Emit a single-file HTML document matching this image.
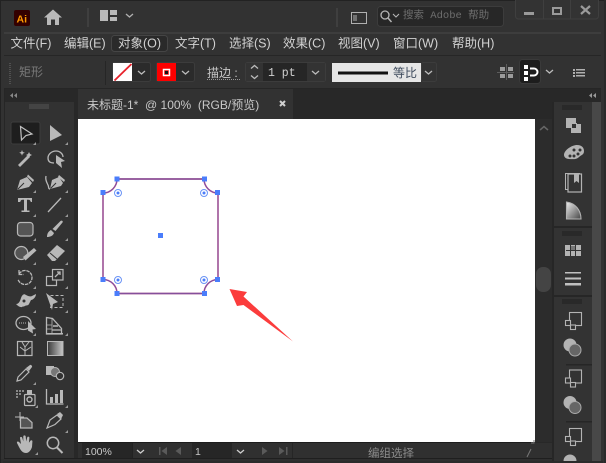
<!DOCTYPE html>
<html><head><meta charset="utf-8"><style>
html,body{margin:0;padding:0;background:#323232;width:606px;height:463px;overflow:hidden}
svg{display:block}
text{font-family:"Liberation Sans","Noto Sans CJK SC",sans-serif}
.m{font-size:12.5px;fill:#d2d2d2}
.t{fill:#b8b8b8;stroke:none}
.o{fill:none;stroke:#b8b8b8;stroke-width:1.3}
</style></head><body>
<svg width="606" height="463" viewBox="0 0 606 463" xmlns="http://www.w3.org/2000/svg">
<rect width="606" height="463" fill="#323232"/>
<rect x="0" y="0" width="606" height="1" fill="#222"/>
<rect x="0" y="0" width="1" height="463" fill="#222"/>
<rect x="604" y="0" width="2" height="463" fill="#2a2a2a"/>
<!-- title bar -->
<rect x="14" y="10" width="16" height="16" rx="2" fill="#330000"/>
<text x="16.500" y="22.500" font-size="10.500" font-weight="bold" fill="#ff9a00">Ai</text>
<path d="M44 17.500 L53 9.500 L62 17.500 H59 V25 H55 V19.500 H51 V25 H47 V17.500Z" fill="#b9b9b9"/>
<rect x="87" y="8" width="2" height="19" fill="#3f3f3f"/>
<path d="M100 10h8v11h-8zM110 10h7v5h-7zM110 17h7v4h-7z" fill="#b9b9b9"/>
<path d="M126 14l3.500 3 3.500-3" fill="none" stroke="#b0b0b0" stroke-width="1.300"/>
<rect x="336" y="8" width="2" height="19" fill="#3f3f3f"/>
<rect x="351.500" y="12.500" width="15" height="11" fill="none" stroke="#b0b0b0"/>
<path d="M354 15v6M356 15v6" stroke="#b0b0b0" stroke-width="1"/>
<rect x="377.500" y="6.500" width="126" height="20" rx="3" fill="#272727" stroke="#3c3c3c"/>
<circle cx="385" cy="15" r="4" fill="none" stroke="#b5b5b5" stroke-width="1.300"/>
<path d="M388 18l3.500 4" stroke="#b5b5b5" stroke-width="1.500"/>
<path d="M393 14l3 3 3-3" fill="none" stroke="#b5b5b5" stroke-width="1.100"/>
<text x="403" y="18" font-size="10.500" fill="#6e6e6e" style="font-family:'Liberation Mono','Noto Sans CJK SC',monospace">搜索 Adobe 帮助</text>
<path d="M515.500 0v16a3 3 0 0 0 3 3h77a3 3 0 0 0 3-3V0" fill="#333" stroke="#3f3f3f"/>
<path d="M543.500 0v19M570.500 0v19" stroke="#3f3f3f"/>
<rect x="524" y="12" width="10" height="3" fill="#9a9a9a"/>
<rect x="553" y="8" width="8" height="6" fill="none" stroke="#9a9a9a" stroke-width="2"/>
<path d="M581 6l9 8M590 6l-9 8" stroke="#9a9a9a" stroke-width="2.200"/>
<rect x="4" y="32" width="597" height="2" fill="#3d3d3d"/>
<!-- menu -->
<rect x="111.500" y="35.500" width="56" height="16" rx="3" fill="#2a2a2a" stroke="#454545"/>
<text class="m" x="10.500" y="47.500">文件(F)</text>
<text class="m" x="64" y="47.500">编辑(E)</text>
<text class="m" x="118" y="47.500">对象(O)</text>
<text class="m" x="175" y="47.500">文字(T)</text>
<text class="m" x="229" y="47.500">选择(S)</text>
<text class="m" x="283" y="47.500">效果(C)</text>
<text class="m" x="338" y="47.500">视图(V)</text>
<text class="m" x="393" y="47.500">窗口(W)</text>
<text class="m" x="452" y="47.500">帮助(H)</text>
<!-- control bar -->
<rect x="4" y="55" width="597" height="33" fill="#323232"/>
<rect x="4" y="55" width="597" height="1" fill="#262626"/>
<path d="M10 63v22" stroke="#505050" stroke-width="2" stroke-dasharray="1 1"/>
<text x="19" y="76" font-size="12" fill="#787878">矩形</text>
<rect x="105" y="61" width="1" height="24" fill="#262626"/>
<rect x="112.500" y="62.500" width="38" height="19" rx="2" fill="#2b2b2b" stroke="#3c3c3c"/>
<rect x="113" y="63" width="19" height="18" fill="#fff"/>
<path d="M114.500 80.500L131.500 64" stroke="#e8222c" stroke-width="1.800"/>
<path d="M138 71l3.500 3 3.500-3" fill="none" stroke="#bbb" stroke-width="1.300"/>
<rect x="156.500" y="62.500" width="38" height="19" rx="2" fill="#2b2b2b" stroke="#3c3c3c"/>
<rect x="157" y="63" width="19" height="18" fill="#fe0000"/>
<rect x="163.500" y="69.500" width="6" height="6" fill="#fe0000" stroke="#fff" stroke-width="1.500"/>
<rect x="165" y="71" width="3" height="3" fill="#111"/>
<path d="M182 71l3.500 3 3.500-3" fill="none" stroke="#bbb" stroke-width="1.300"/>
<text x="207" y="77" font-size="12" fill="#c8c8c8">描边 :</text>
<path d="M207 79.500h33" stroke="#999" stroke-dasharray="1 1"/>
<rect x="245.500" y="62.500" width="80" height="19" rx="2" fill="#262626" stroke="#3c3c3c"/>
<rect x="246" y="63" width="17" height="18" fill="#333"/>
<path d="M251 68.500l3.500-3 3.500 3M251 75.500l3.500 3 3.500-3" fill="none" stroke="#bbb" stroke-width="1.300"/>
<text x="268" y="76" font-size="11.500" fill="#d0d0d0" style="font-family:'Liberation Mono',monospace">1 pt</text>
<rect x="307" y="63" width="18" height="18" fill="#333"/>
<path d="M312 71l3.500 3 3.500-3" fill="none" stroke="#bbb" stroke-width="1.300"/>
<rect x="332" y="63" width="89" height="19" fill="#e6e6e6"/>
<rect x="338" y="71.500" width="50" height="3" fill="#111"/>
<text x="393" y="77" font-size="12" fill="#3d4a5c">等比</text>
<rect x="421.500" y="62.500" width="15" height="19" rx="2" fill="#333" stroke="#3c3c3c"/>
<path d="M425 71l3.500 3 3.500-3" fill="none" stroke="#bbb" stroke-width="1.300"/>
<path d="M500 67h5v4h-5zM508 67h5v4h-5zM500 74h5v4h-5zM508 74h5v4h-5z" fill="#9b9b9b"/>
<path d="M497 72.500h17M506.500 64v16" stroke="#5c5c5c"/>
<rect x="519.500" y="59.500" width="21" height="24" rx="3" fill="#1d1d1d" stroke="#3a3a3a"/>
<path d="M524 65h4v4h-4zM524 71h4v4h-4zM524 77h4v4h-4z" fill="#fff"/>
<path d="M530 68.500h4a3.500 3.500 0 0 1 0 7h-4" fill="none" stroke="#fff" stroke-width="2"/>
<path d="M546 70l3.500 3 3.500-3" fill="none" stroke="#bbb" stroke-width="1.300"/>
<path d="M573 69h2v2h-2zM573 72h2v2h-2zM573 75h2v2h-2zM576 69h9v1.500h-9zM576 72h9v1.500h-9zM576 75h9v1.500h-9z" fill="#b0b0b0"/>
<rect x="4" y="88" width="597" height="1" fill="#262626"/>
<!-- left panel head -->
<rect x="5" y="89" width="69" height="13" fill="#282828"/>
<rect x="4" y="89" width="1" height="370" fill="#262626"/>
<path d="M13 93l-3 2.500 3 2.500zM17 93l-3 2.500 3 2.500z" fill="#888"/>
<path d="M30 104v5M32 104v5M34 104v5M36 104v5M38 104v5M40 104v5M42 104v5M44 104v5M46 104v5M48 104v5" stroke="#555" stroke-width="1"/>
<!-- document area -->
<rect x="74" y="89" width="478" height="370" fill="#282828"/>
<rect x="78" y="89" width="215" height="30" fill="#323232"/>
<text x="87" y="109" font-size="12" fill="#c8c8c8" xml:space="preserve" style="white-space:pre">未标题-1*  @ 100%  (RGB/预览)</text>
<path d="M280 101l5 5M285 101l-5 5" stroke="#d0d0d0" stroke-width="2"/>
<rect x="78" y="119" width="457" height="323" fill="#fff"/>
<!-- scrollbar -->
<rect x="535" y="119" width="17" height="323" fill="#2c2c2c"/>
<path d="M540 130l4-3.500 4 3.500" fill="none" stroke="#666" stroke-width="1.500"/>
<rect x="536" y="267" width="15" height="25" rx="7" fill="#444"/>
<!-- artwork -->
<path d="M117 179H204A14 14 0 0 0 218 193V279.500A14 14 0 0 0 204 293.500H117A14 14 0 0 0 103 279.500V193A14 14 0 0 0 117 179Z" fill="#fff" stroke="#fb7a7a" stroke-width="1.600"/>
<path d="M117 179H204A14 14 0 0 0 218 193V279.500A14 14 0 0 0 204 293.500H117A14 14 0 0 0 103 279.500V193A14 14 0 0 0 117 179Z" fill="none" stroke="#7d4ea8" stroke-width="1.200"/>
<path d="M117 179H204M117 293.500H204" stroke="#844f9c" stroke-width="1.600"/>
<g fill="#4a7dfb">
<rect x="114.500" y="176.500" width="5" height="5"/><rect x="202" y="176.500" width="5" height="5"/>
<rect x="100.500" y="190" width="5" height="5"/><rect x="215" y="190" width="5" height="5"/>
<rect x="100.500" y="277" width="5" height="5"/><rect x="215" y="277" width="5" height="5"/>
<rect x="114.500" y="291" width="5" height="5"/><rect x="202" y="291" width="5" height="5"/>
<rect x="158" y="233" width="5" height="5"/>
</g>
<g fill="#fff" stroke="#6b94f5" stroke-width="1">
<circle cx="118" cy="193" r="3.500"/><circle cx="204" cy="193" r="3.500"/><circle cx="118" cy="280" r="3.500"/><circle cx="204" cy="280" r="3.500"/>
</g>
<g fill="#4a7dfb"><circle cx="118" cy="193" r="1.500"/><circle cx="204" cy="193" r="1.500"/><circle cx="118" cy="280" r="1.500"/><circle cx="204" cy="280" r="1.500"/></g>
<polygon points="229.500,289 247,292 243.500,296.500 293,341.500 243.500,305 237,306" fill="#fb3c3c"/>
<!-- status bar -->
<rect x="78" y="442" width="457" height="1" fill="#1d1d1d"/>
<rect x="78" y="443" width="474" height="15" fill="#303030"/>
<rect x="82" y="443" width="50" height="15" fill="#262626"/>
<text x="85" y="455" font-size="10.500" fill="#c8c8c8">100%</text>
<rect x="132" y="443" width="1" height="15" fill="#222"/>
<path d="M137 450l3.500 3 3.500-3" fill="none" stroke="#ccc" stroke-width="1.300"/>
<path d="M159 447v8h1.500v-8zM167 447l-5.500 4 5.500 4zM181 447l-5.500 4 5.500 4zM262 447l5.500 4-5.500 4zM279 447l5.500 4-5.500 4zM286 447v8h1.500v-8z" fill="#5a5a5a"/>
<rect x="192" y="443" width="40" height="15" fill="#262626"/>
<text x="195" y="455" font-size="10.500" fill="#c8c8c8">1</text>
<path d="M237 450l3.500 3 3.500-3" fill="none" stroke="#ccc" stroke-width="1.300"/>
<rect x="292" y="443" width="1" height="15" fill="#262626"/>
<text x="368" y="457" font-size="11.500" fill="#8a8a8a">编组选择</text>
<path d="M527 457l4-8M531 443h3v-3" fill="none" stroke="#777"/>
<rect x="4" y="458" width="548" height="1" fill="#1f1f1f"/>
<rect x="1" y="459" width="551" height="4" fill="#2f2f2f"/>
<!-- tools -->
<rect x="11" y="122" width="29" height="22" rx="2" fill="#1e1e1e" stroke="#3c3c3c"/>
<path d="M20.500 126.500L32 134L26 135.500L21.500 140Z" fill="none" stroke="#c0c0c0" stroke-width="1.200"/>
<path d="M50 125L62 135L50 141Z" class="t"/>
<path d="M18 165l10-10 2 2-10 10z" class="t"/><path d="M29 152l1 2 2 1-2 1-1 2-1-2-2-1 2-1zM22 150l.8 2 2 .8-2 .8-.8 2-.8-2-2-.8 2-.8z" class="t"/>
<path d="M48 158c0-4 4-7 8-7 4 0 7 3 7 6" class="o"/><path d="M48 158c0 4 3 5 6 5" class="o"/><path d="M56 155l9 6-4 1 1 6-6-5z" class="t"/>
<!-- pen -->
<path d="M17 190L20 180L27 177L32 183L29 187Z" class="t"/><path d="M28 174.500L34 180L33 182L27 176.500Z" class="t"/><path d="M17.500 189.500L24 183" stroke="#323232"/>
<!-- anchor pen -->
<path d="M46 176c-1 4 1 7 2 9 1 2 0 4 2 4" class="o"/><path d="M50 189L52 180L59 177L63 183L61 186Z" class="t"/><path d="M59 175L65 180L64 182L58 177Z" class="t"/><path d="M50.500 188.500L56 183" stroke="#323232"/>
<!-- type -->
<path d="M18 198h14v4h-1.200c-.4-1.500-1-2.200-2.500-2.200h-1.300V210.500h2.500v1.500h-8v-1.500H24V199.800h-1.300c-1.500 0-2.100.7-2.500 2.200H18z" class="t"/>
<path d="M48 212l13-14" class="o"/>
<rect x="17.500" y="222.500" width="15.500" height="13.500" rx="3" fill="#555" stroke="#b8b8b8" stroke-width="1.200"/>
<path d="M47 237c3 0 6-1 7-4l-3-3c-2 1-4 3-4 7zM52.500 229l8-8c1-1 3 0 2 1.500l-7 8.500z" class="t"/>
<circle cx="21.300" cy="253" r="6.500" fill="#555" stroke="#b8b8b8" stroke-width="1.200"/><path d="M23 257l11-9 2.500 2.500-11 10z" class="t"/>
<path d="M47 255l10-10 8 6-10 10h-3z" class="t"/><path d="M50 253l7 6" stroke="#323232"/>
<path d="M19 270v4.500h4.500M19 274c1.500-2.500 4-3.500 6-3.500 4 0 7 3 7 7s-3 7-7 7c-3 0-6-2-7-5" fill="none" stroke="#b8b8b8" stroke-width="1.300" stroke-dasharray="3.500 0.800"/>
<rect x="46.500" y="276.500" width="10" height="9" fill="none" stroke="#b8b8b8" stroke-width="1.200"/><rect x="52.500" y="269.500" width="10.500" height="10.500" fill="#323232" stroke="#b8b8b8" stroke-width="1.200"/><path d="M55 277l5-5M57 272h3v3" class="o"/>
<!-- puppet -->
<path d="M16 304c3 0 4-3 5-6 1-3 3-5 5-3 2 1 4 2 6 1l4-2c0 3-3 6-5 6l-2 4c-1 2-3 1-4 2-2 1-2 0-3 1-2 .5-4-1-6-3z" class="t"/><circle cx="24" cy="301" r="1.500" fill="#323232"/>
<path d="M46 293l12 9-5 2-1 6z" class="t"/><rect x="50.500" y="295.500" width="12.500" height="12" fill="none" stroke="#b8b8b8" stroke-width="1" stroke-dasharray="3 2"/>
<ellipse cx="23.500" cy="323" rx="7.500" ry="6.500" class="o"/><path d="M19 323h7" stroke="#b8b8b8" stroke-dasharray="1 1"/><path d="M28 321l8 8-3.500.5.500 4-5-3z" class="t"/>
<path d="M46.500 317.500l6 1 9 10v5.500h-15z" class="o"/><path d="M46 333h17v1.500H46z" class="t"/><path d="M52 329h9v2h-9z" fill="#888"/><path d="M53 325h5v2h-5z" fill="#999"/><path d="M52 318v16M46.500 325h5M46.500 329h5" stroke="#b8b8b8" stroke-width=".8"/>
<rect x="17.500" y="341.500" width="14.500" height="14" fill="none" stroke="#b8b8b8" stroke-width="1.200"/><path d="M25 356v-9M25 351l-5-4M25 351l6-4M25 347l-3-5M25 347l4-5" stroke="#b8b8b8" fill="none"/>
<defs><linearGradient id="g"><stop offset="0" stop-color="#3a3a3a"/><stop offset="1" stop-color="#c8c8c8"/></linearGradient><linearGradient id="h" x1="0" y1="0" x2="1" y2="1"><stop offset="0" stop-color="#eee"/><stop offset="1" stop-color="#444"/></linearGradient></defs>
<rect x="47.500" y="341.500" width="15.500" height="14" fill="url(#g)" stroke="#b8b8b8"/>
<!-- eyedropper -->
<path d="M17 381l1-4 8-8 3 3-8 8z" fill="#323232" stroke="#b8b8b8" stroke-width="1.200"/><path d="M26 368l4-3c1-.5 2.500 1 2 2l-3 4z" class="t"/>
<path d="M46 366h8v9h-8z" class="t"/><circle cx="55" cy="372" r="4.500" fill="#777" stroke="#b8b8b8"/><circle cx="60" cy="376" r="3.700" fill="#323232" stroke="#b8b8b8" stroke-width="1.200"/>
<!-- spray -->
<path d="M16 390h2v2h-2zM19 390h2v2h-2zM22 390h2v2h-2zM16 393h2v2h-2zM19 393h2v2h-2zM16 396h2v2h-2z" fill="#888"/>
<rect x="24.500" y="394.500" width="10.500" height="11" fill="#323232" stroke="#b8b8b8" stroke-width="1.200" rx="1"/><path d="M27 390h5v4h-5z" class="t"/><circle cx="29.500" cy="399.500" r="2.500" fill="none" stroke="#b8b8b8" stroke-width="1.400"/>
<!-- graph -->
<path d="M46.500 389v15h17" class="o"/><path d="M50 397h3v6h-3zM55 394h3v9h-3zM60 390h3v13h-3z" class="t"/>
<!-- artboard -->
<path d="M15 417h9M20 412v9" stroke="#b8b8b8"/><path d="M20.500 418h6.500l5 4.500v5.500H20.500z" fill="#555" stroke="#b8b8b8" stroke-width="1.200"/>
<!-- slice -->
<path d="M47 428l3-8 7-5 4 4-6 5.500z" fill="#323232" stroke="#b8b8b8" stroke-width="1.200"/><path d="M57 414l3-2 3 3-2 4z" class="t"/>
<!-- hand -->
<path d="M19 447l-2-4c-.5-1.500 1-2 2-1l2 2-1-6c0-1.500 2-1.500 2.300 0l1 3.500v-5c0-1.500 2.200-1.500 2.400 0l.5 5 1-4c.3-1.500 2.300-1 2.200.3l-.5 5 1.500-2c.8-1 2.300-.4 2 .8L32 447c-1 3-3 6-6 6-3 0-5-2-7-6z" class="t"/>
<circle cx="53" cy="443" r="5.700" fill="none" stroke="#b8b8b8" stroke-width="1.500"/><path d="M57 447.500l5.500 5.500" stroke="#b8b8b8" stroke-width="2"/>
<g fill="#999">
<path d="M36 142l-3 3h3zM68 142l-3 3h3z M36 190l-3 3h3zM68 190l-3 3h3zM36 214l-3 3h3zM68 214l-3 3h3zM36 238l-3 3h3zM68 238l-3 3h3zM36 262l-3 3h3zM68 262l-3 3h3zM36 286l-3 3h3zM68 286l-3 3h3zM36 310l-3 3h3zM68 310l-3 3h3zM36 333l-3 3h3zM68 333l-3 3h3zM36 382l-3 3h3zM38 405l-3 3h3zM68 405l-3 3h3zM68 430l-3 3h3zM38 452l-3 3h3z"/>
</g>
<!-- right panel -->
<rect x="552" y="89" width="49" height="13" fill="#282828"/>
<path d="M592 93l-3 2.500 3 2.500zM596 93l-3 2.500 3 2.500z" fill="#999"/>
<rect x="554" y="102" width="38" height="361" fill="#333"/>
<rect x="592" y="102" width="9" height="361" fill="#484848"/>
<rect x="552" y="102" width="2" height="361" fill="#262626"/>
<path d="M563 105v5M565 105v5M567 105v5M569 105v5M571 105v5M573 105v5M575 105v5M577 105v5M579 105v5M581 105v5" stroke="#1f1f1f"/>
<path d="M566 118h10v6h5v9h-10v-5h-5z" fill="#b3b3b3"/><rect x="571.500" y="123.500" width="5" height="5" fill="#333" stroke="#b3b3b3"/>
<path d="M564 155c0-5 8-10 13-10 5 0 7 3 7 6 0 4-3 4-5 6-3 3-7 2-10 2-3 0-5-2-5-4z" fill="#b3b3b3"/>
<g fill="#333"><circle cx="570" cy="156" r="1.500"/><circle cx="574" cy="156" r="1.500"/><circle cx="578" cy="154" r="1.500"/><circle cx="580" cy="150" r="1.500"/><circle cx="574" cy="150" r="1.500"/></g>
<rect x="565.500" y="173.500" width="14" height="16" fill="none" stroke="#b3b3b3"/><rect x="568" y="174" width="13.500" height="18" fill="#333" stroke="#b3b3b3" stroke-width="1.200"/><path d="M574 174h5v9l-2.500-2-2.500 2z" fill="#b3b3b3"/>
<path d="M566.500 202v17H581c0-9-6-16-14.500-17z" fill="url(#h)" stroke="#b3b3b3" stroke-width="1.100"/>
<rect x="554" y="226" width="38" height="2" fill="#262626"/>
<path d="M563 231v5M565 231v5M567 231v5M569 231v5M571 231v5M573 231v5M575 231v5M577 231v5M579 231v5M581 231v5" stroke="#1f1f1f"/>
<rect x="565.500" y="245.500" width="15" height="10" fill="#b3b3b3" stroke="#b3b3b3"/><path d="M566 250.500h15M570.500 245v11M575.500 245v11" stroke="#333"/><rect x="571" y="246" width="4" height="4" fill="#777"/>
<path d="M565 272h16v1.500h-16zM565 277.500h16v2h-16zM565 283h16v2.500h-16z" fill="#c0c0c0"/>
<rect x="554" y="295" width="38" height="2" fill="#262626"/>
<path d="M563 299v5M565 299v5M567 299v5M569 299v5M571 299v5M573 299v5M575 299v5M577 299v5M579 299v5M581 299v5" stroke="#1f1f1f"/>
<g id="r1">
<rect x="569.500" y="312.500" width="12" height="13" fill="none" stroke="#b3b3b3" stroke-width="1.100"/>
<rect x="565.500" y="320.500" width="5" height="5" fill="#333" stroke="#b3b3b3" stroke-width="1.100"/>
<rect x="570.500" y="325" width="5" height="4.500" fill="#333" stroke="#b3b3b3" stroke-width="1.100"/>
<circle cx="570" cy="345" r="6.500" fill="#b3b3b3"/><circle cx="575" cy="350" r="6" fill="#666" stroke="#aaa"/>
</g>
<rect x="566" y="364" width="26" height="1.500" fill="#262626"/>
<use href="#r1" y="57.500"/>
<rect x="566" y="421" width="26" height="1.500" fill="#262626"/>
<g>
<rect x="569.500" y="428.500" width="12" height="13" fill="none" stroke="#b3b3b3" stroke-width="1.100"/>
<rect x="565.500" y="436.500" width="5" height="5" fill="#333" stroke="#b3b3b3" stroke-width="1.100"/>
<rect x="570.500" y="441" width="5" height="4.500" fill="#333" stroke="#b3b3b3" stroke-width="1.100"/>
<circle cx="570" cy="461" r="6.500" fill="#b3b3b3"/>
</g>
<rect x="3" y="461" width="600" height="2" fill="#2b2b2b"/>
</svg>
</body></html>
